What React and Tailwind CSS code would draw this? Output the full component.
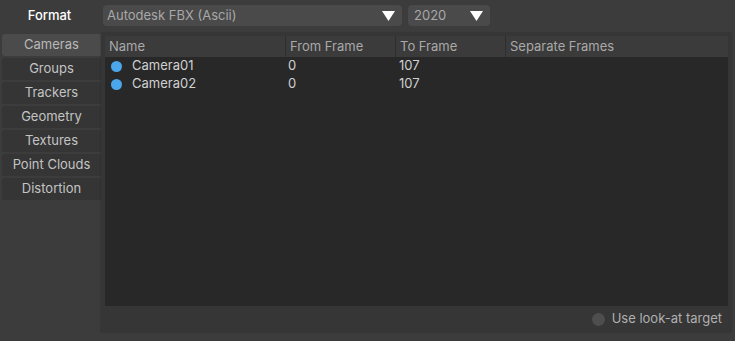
import React from "react";

const tabs = ["Cameras", "Groups", "Trackers", "Geometry", "Textures", "Point Clouds", "Distortion"];

function Caret() {
  return (
    <svg width="13" height="10" viewBox="0 0 13 10" className="shrink-0">
      <path d="M0 0 H13 L6.5 10 Z" fill="#ffffff" />
    </svg>
  );
}

export default function App() {
  return (
    <div
      className="w-[735px] h-[341px] bg-[#3c3c3c] text-[13px] overflow-hidden relative"
      style={{ fontFamily: "Inter, 'Liberation Sans', sans-serif" }}
    >
      {/* Top row */}
      <div className="flex items-center h-[30px] pt-[5px] pb-[4px]">
        <div className="w-[99px] text-center text-white font-medium text-[13px]">Format</div>
        <div className="ml-[4px] w-[299px] h-[21px] bg-[#4a4a4a] rounded-[4px] flex items-center justify-between pl-[4px] pr-[7px] text-[#a8a8a8]">
          <span>Autodesk FBX (Ascii)</span>
          <Caret />
        </div>
        <div className="ml-[6px] w-[82px] h-[21px] bg-[#4a4a4a] rounded-[4px] flex items-center justify-between pl-[6px] pr-[7px] text-[#a8a8a8]">
          <span>2020</span>
          <Caret />
        </div>
      </div>

      <div className="flex mt-[3px]">
        {/* Tabs */}
        <div className="w-[101px] pl-[2px] flex flex-col gap-[2px] pt-[1px]">
          {tabs.map((t, i) => (
            <div
              key={t}
              className={
                i === 0
                  ? "h-[22px] flex items-center justify-center bg-[#4b4b4b] text-[#b8b8b8] rounded-l-[3px]"
                  : "h-[22px] flex items-center justify-center bg-[#353535] text-[#c4c4c4] rounded-l-[3px]"
              }
            >
              {t}
            </div>
          ))}
        </div>

        {/* Panel */}
        <div className="w-[630px] h-[299px] bg-[#363636] rounded-[2px] pt-[3px] px-[4px] pr-[3px] flex flex-col shadow-[0_0_2px_rgba(0,0,0,0.35)]">
          <div className="h-[270px] bg-[#282828] flex flex-col">
            <div className="h-[21px] bg-[#3b3b3b] flex items-center text-[#a9a9a9]">
              <div className="w-[180px] pl-[4px]">Name</div>
              <div className="w-[110px] pl-[4px] h-full flex items-center border-l border-[#2e2e2e]">From Frame</div>
              <div className="w-[110px] pl-[4px] h-full flex items-center border-l border-[#2e2e2e]">To Frame</div>
              <div className="flex-1 pl-[4px] h-full flex items-center border-l border-[#2e2e2e]">Separate Frames</div>
            </div>
            {["Camera01", "Camera02"].map((c) => (
              <div key={c} className="h-[18px] flex items-center text-[#d0d0d0]">
                <div className="w-[180px] pl-[6px] flex items-center">
                  <span className="w-[11px] h-[11px] rounded-full bg-[#4ba6ec] inline-block" />
                  <span className="ml-[10px]">{c}</span>
                </div>
                <div className="w-[110px] pl-[3px]">0</div>
                <div className="w-[110px] pl-[4px]">107</div>
              </div>
            ))}
          </div>
          <div className="flex-1 flex items-center justify-end pr-[6px] text-[#b0b0b0]">
            <span className="w-[13px] h-[13px] rounded-full bg-[#4e4e4e] inline-block mr-[7px]" />
            <span>Use look-at target</span>
          </div>
        </div>
      </div>
    </div>
  );
}
